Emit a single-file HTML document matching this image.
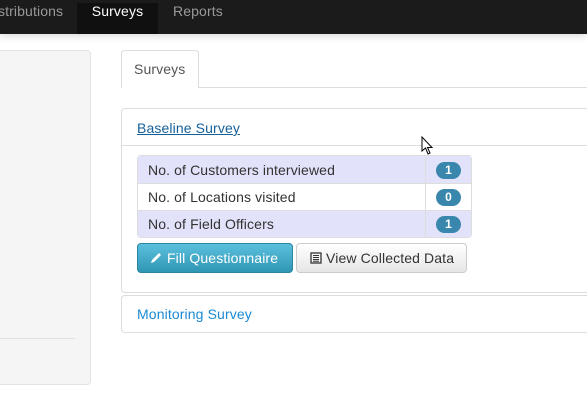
<!DOCTYPE html>
<html><head><style>
*{box-sizing:border-box;margin:0;padding:0}
body{width:587px;height:405px;overflow:hidden;background:#fff;font-family:"Liberation Sans",sans-serif;font-size:14px;color:#333;position:relative;letter-spacing:.12px}
.nav{position:absolute;left:0;top:0;width:587px;height:34px;background:#1b1b1b;box-shadow:0 2px 8px rgba(0,0,0,.15)}
.nav span{position:absolute;top:3px;font-size:14px;color:#999}
.nav .act{left:77px;width:81px;height:31px;background:#101010;color:#fff;text-align:center;padding-top:0}
.side{position:absolute;left:-10px;top:50px;width:101px;height:335px;background:#f5f5f5;border:1px solid #e3e3e3;border-radius:4px}
.side i{position:absolute;left:0;top:287px;width:84px;border-top:1px solid #e0e0e0}
.tabline{position:absolute;left:121px;top:87px;width:480px;border-top:1px solid #ddd}
.tab{position:absolute;left:121px;top:50px;width:78px;height:38px;border:1px solid #ddd;border-bottom:none;border-radius:4px 4px 0 0;background:#fff;color:#555;padding:10px 0 0 12px}
.panel{position:absolute;left:121px;width:480px;border:1px solid #ddd;border-radius:4px;background:#fff}
.p1{top:108px;height:185px}
.p1 .hd{height:37px;border-bottom:1px solid #ddd;padding:11px 0 0 15px}
.p1 .hd a{color:#15609a;text-decoration:underline}
table{position:absolute;left:15px;top:46px;width:335px;border-collapse:separate;border-spacing:0;border:1px solid #ddd;border-radius:4px}
td{height:27px;padding:0 10px;border-top:1px solid #ddd}
tr:first-child td{border-top:none}
td+td{border-left:1px solid #ddd;width:46px;text-align:center}
tr.o td{background:#e2e2fa}
.b{display:inline-block;background:#3a87ad;color:#fff;font-weight:bold;font-size:12px;border-radius:9px;width:25px;height:17px;line-height:17px;text-align:center}
.btn{position:absolute;top:134px;height:30px;border-radius:4px;font-size:14px;padding:6px 0 0 0}
.f{left:15px;width:156px;background:linear-gradient(#5bc0de,#2f96b4);border:1px solid #2a85a0;color:#fff;padding-left:12px}
.v{left:174px;width:171px;background:linear-gradient(#fff,#e6e6e6);border:1px solid #ccc;color:#333;padding-left:13px}
.p2{top:295px;height:38px;padding:10px 0 0 15px;color:#1a8ad4}
</style></head><body>
<div class="nav"><span style="left:-2px">stributions</span><span class="act">Surveys</span><span style="left:173px">Reports</span></div>
<div class="side"><i></i></div>
<div class="tabline"></div>
<div class="tab">Surveys</div>
<div class="panel p1">
<div class="hd"><a>Baseline Survey</a></div>
<table>
<tr class="o"><td>No. of Customers interviewed</td><td><span class="b">1</span></td></tr>
<tr><td>No. of Locations visited</td><td><span class="b">0</span></td></tr>
<tr class="o"><td>No. of Field Officers</td><td><span class="b">1</span></td></tr>
</table>
<div class="btn f"><svg width="13" height="13" viewBox="0 0 13 13" style="vertical-align:-1px"><path d="M1 12 L2 9 L9 2 L11 4 L4 11 Z" fill="#fff"/></svg> Fill Questionnaire</div>
<div class="btn v"><svg width="12" height="12" viewBox="0 0 12 12" style="vertical-align:-1px"><rect x="1" y="1" width="10" height="10" fill="none" stroke="#333" stroke-width="1.3"/><path d="M3 3.5h6M3 5.5h6M3 7.5h6M3 9.3h6" stroke="#333" stroke-width="1"/></svg> View Collected Data</div>
</div>
<div class="panel p2">Monitoring Survey</div>
<svg style="position:absolute;left:421px;top:136px" width="14" height="20" viewBox="0 0 14 20"><path d="M1 1 L1 15 L4.5 12 L7 18 L9 17 L6.5 11.5 L11 11.5 Z" fill="#fff" stroke="#000" stroke-width="1"/></svg>
</body></html>
